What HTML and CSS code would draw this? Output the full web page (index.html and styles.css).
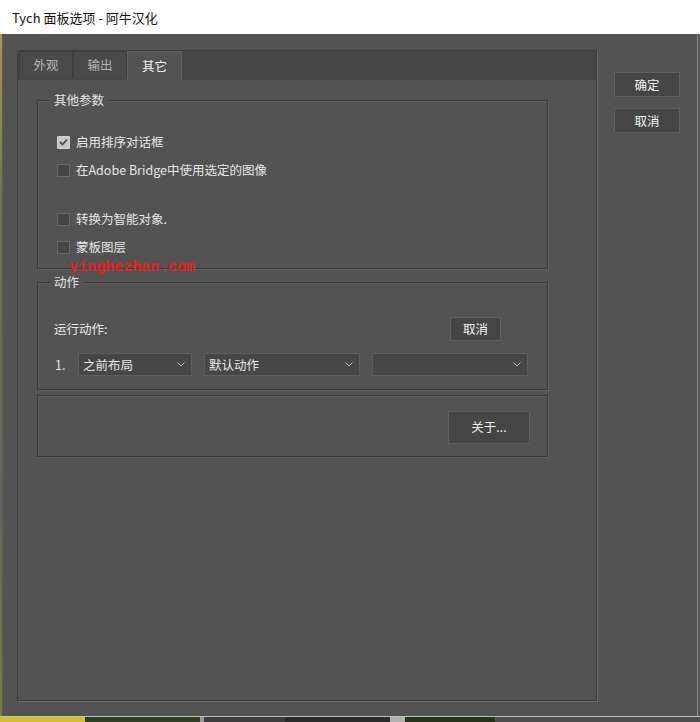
FILE: index.html
```html
<!DOCTYPE html>
<html lang="zh-CN">
<head>
<meta charset="utf-8">
<title>Tych 面板选项</title>
<link rel="stylesheet" href="styles.css">
</head>
<body>
<div class="screen">
  <div class="titlebar"><span class="title">Tych 面板选项 - 阿牛汉化</span></div>
  <div class="window">
    <div class="edge-left"></div>
    <div class="client">
      <div class="tabpanel">
        <div class="tabbar">
          <div class="tab">外观</div>
          <div class="tab">输出</div>
          <div class="tab active">其它</div>
        </div>
        <div class="tabbody">
          <div class="group g1">
            <span class="legend">其他参数</span>
            <div class="row r1"><span class="cb checked"><svg width="9" height="8" viewBox="0 0 9 8"><polyline points="1,4 3.5,6.5 8,1.5" fill="none" stroke="#505050" stroke-width="1.8"/></svg></span><span class="lbl">启用排序对话框</span></div>
            <div class="row r2"><span class="cb"></span><span class="lbl">在Adobe Bridge中使用选定的图像</span></div>
            <div class="row r3"><span class="cb"></span><span class="lbl">转换为智能对象.</span></div>
            <div class="row r4"><span class="cb"></span><span class="lbl">蒙板图层</span></div>
            <span class="watermark">yinghezhan.com</span>
          </div>
          <div class="group g2">
            <span class="legend">动作</span>
            <div class="arow1">
              <span class="lbl">运行动作:</span>
              <button class="btn btn-cancel2">取消</button>
            </div>
            <div class="arow2">
              <span class="num">1.</span>
              <div class="dd dd1"><span>之前布局</span><svg class="chev" width="8" height="5" viewBox="0 0 8 5"><polyline points="0.5,0.5 4,4 7.5,0.5" fill="none" stroke="#b8b8b8" stroke-width="1"/></svg></div>
              <div class="dd dd2"><span>默认动作</span><svg class="chev" width="8" height="5" viewBox="0 0 8 5"><polyline points="0.5,0.5 4,4 7.5,0.5" fill="none" stroke="#b8b8b8" stroke-width="1"/></svg></div>
              <div class="dd dd3"><span></span><svg class="chev" width="8" height="5" viewBox="0 0 8 5"><polyline points="0.5,0.5 4,4 7.5,0.5" fill="none" stroke="#b8b8b8" stroke-width="1"/></svg></div>
            </div>
          </div>
          <div class="group g3">
            <button class="btn btn-about">关于...</button>
          </div>
        </div>
      </div>
      <div class="side">
        <button class="btn btn-side">确定</button>
        <button class="btn btn-side">取消</button>
      </div>
    </div>
    <div class="edge-right"></div>
  </div>
  <div class="desktop">
    <div class="d d-yellow"></div>
    <div class="d d-green"></div>
    <div class="d d-line"></div>
    <div class="d d-gray"></div>
    <div class="d d-dark"></div>
    <div class="d d-light"></div>
    <div class="d d-green2"></div>
    <div class="d d-rest"></div>
  </div>
</div>
</body>
</html>
```

FILE: styles.css
```css
* { box-sizing: border-box; }
html, body { margin: 0; padding: 0; }
body {
  width: 700px;
  height: 722px;
  overflow: hidden;
  background: #535353;
  font-family: "Noto Sans CJK SC", "Noto Sans", sans-serif;
  font-size: 12.5px;
}
.screen { width: 700px; height: 722px; display: flex; flex-direction: column; }

.titlebar {
  height: 34px;
  background: #ffffff;
  display: flex;
  align-items: center;
  padding-left: 12px;
  flex: none;
}
.title { color: #111; font-size: 13px; line-height: 16px; position: relative; top: 1px; }

.window { display: flex; height: 682px; flex: none; }
.edge-left {
  width: 3px;
  background: linear-gradient(#a39a52, #6f7158 25%, #62645a 70%, #7d7b4c);
  border-right: 1px solid #5c5c5c;
  flex: none;
}
.edge-right {
  width: 3px;
  flex: none;
  background: #555;
  border-left: 1px solid #8a8a8a;
}
.client { flex: 1; display: flex; background: #535353; }

.tabpanel {
  margin-left: 14px;
  margin-top: 16px;
  width: 580px;
  height: 651px;
  border: 1px solid #3f3f3f;
  box-shadow: 1px 1px 0 #666;
  display: flex;
  flex-direction: column;
  flex: none;
}
.tabbar {
  height: 29px;
  background: #474747;
  display: flex;
  padding-left: 1px;
  align-items: flex-start;
  flex: none;
}
.tab {
  height: 27px;
  width: 54px;
  background: #4a4a4a;
  border: 1px solid #3e3e3e;
  border-bottom: none;
  color: #b4b4b4;
  display: flex;
  align-items: center;
  justify-content: center;
  line-height: 16px;
}
.tab.active {
  height: 29px;
  width: 55px;
  background: #535353;
  color: #f0f0f0;
  border-color: #5e5e5e;
}
.tabbody {
  flex: 1;
  background: #535353;
  padding: 20px 0 0 19px;
}

.group {
  position: relative;
  width: 511px;
  border: 1px solid #3c3c3c;
  box-shadow: 1px 1px 0 #616161, inset 1px 1px 0 #5e5e5e;
}
.legend {
  position: absolute;
  top: -10px;
  left: 12px;
  padding: 0 4px;
  background: #535353;
  color: #e4e4e4;
  line-height: 18px;
}
.g1 { height: 169px; padding: 31px 0 0 19px; }
.row { display: flex; align-items: center; height: 20px; }
.r2, .r4 { margin-top: 8px; }
.r3 { margin-top: 29px; }
.cb {
  width: 13px;
  height: 13px;
  border: 1px solid #686868;
  background: #464646;
  margin-right: 6px;
  display: flex;
  align-items: center;
  justify-content: center;
  flex: none;
}
.cb.checked { background: #c6c6c6; border-color: #d0d0d0; border-radius: 1px; }
.lbl { color: #e6e6e6; line-height: 16px; }
.watermark {
  position: absolute;
  left: 31px;
  top: 159px;
  color: #ee1c1c;
  font-family: "Liberation Mono", monospace;
  font-weight: bold;
  font-size: 15px;
  line-height: 16px;
}

.g2 { margin-top: 13px; height: 108px; padding: 34px 17px 0 16px; }
.arow1 { display: flex; justify-content: space-between; align-items: center; height: 24px; }
.arow2 { display: flex; align-items: center; margin-top: 12px; height: 23px; }
.num { width: 24px; padding-left: 1px; color: #e0e0e0; line-height: 16px; }
.dd {
  height: 23px;
  background: #474747;
  border: 1px solid #5f5f5f;
  display: flex;
  align-items: center;
  justify-content: space-between;
  padding: 0 6px 0 4px;
  color: #e8e8e8;
  line-height: 16px;
}
.dd1 { width: 114px; }
.dd2 { width: 156px; margin-left: 12px; }
.dd3 { width: 156px; margin-left: 12px; }
.chev { flex: none; }

.btn {
  font-family: "Noto Sans CJK SC", "Noto Sans", sans-serif;
  font-size: 12.5px;
  background: #464646;
  border: 1px solid #606060;
  color: #f0f0f0;
  padding: 0;
  line-height: 16px;
  display: flex;
  align-items: center;
  justify-content: center;
}
.btn-cancel2 { width: 51px; height: 24px; margin-right: 29px; }

.g3 {
  margin-top: 5px;
  height: 62px;
  display: flex;
  justify-content: flex-end;
  align-items: center;
  padding: 2px 17px 0 0;
}
.btn-about { width: 82px; height: 33px; }

.side {
  margin-left: 17px;
  margin-top: 38px;
  display: flex;
  flex-direction: column;
  gap: 11px;
}
.btn-side { width: 66px; height: 25px; }

.desktop {
  height: 6px;
  flex: none;
  display: flex;
  border-top: 1px solid #bdbdbd;
}
.d { height: 100%; }
.d-yellow { width: 85px; background: #d6bf2e; }
.d-green { width: 115px; background: #2e3f22; }
.d-line { width: 4px; background: #9a9a9a; }
.d-gray { width: 81px; background: #3d3d3d; }
.d-dark { width: 105px; background: #2b2b2b; }
.d-light { width: 15px; background: #b0b0b0; }
.d-green2 { width: 90px; background: #25351c; }
.d-rest { flex: 1; background: #4e4e4e; }
```
